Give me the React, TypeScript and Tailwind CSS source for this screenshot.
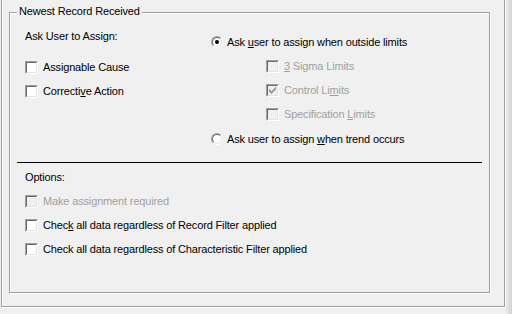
import React from 'react';

const font = "font-['Liberation_Sans',Arial,sans-serif]";

function CheckMark() {
  // classic 7x7 pixel tick
  const px: [number, number][] = [
    [6, 0], [5, 1], [6, 1], [0, 2], [4, 2], [5, 2], [6, 2],
    [0, 3], [1, 3], [3, 3], [4, 3], [5, 3],
    [0, 4], [1, 4], [2, 4], [3, 4], [4, 4],
    [1, 5], [2, 5], [3, 5], [2, 6],
  ];
  return (
    <svg width="7" height="7" viewBox="0 0 7 7" shapeRendering="crispEdges">
      {px.map(([x, y]) => (
        <rect key={`${x}-${y}`} x={x} y={y} width="1" height="1" fill="#a0a0a0" />
      ))}
    </svg>
  );
}

function Box({ checked = false, disabled = false }: { checked?: boolean; disabled?: boolean }) {
  return (
    <div className="w-[13px] h-[13px] shrink-0 border-t border-l border-[#a0a0a0] border-b-white border-r-white border-b border-r">
      <div
        className={`w-[11px] h-[11px] border-t border-l border-[#696969] border-b border-r border-b-[#e3e3e3] border-r-[#e3e3e3] flex items-center justify-center ${
          disabled ? 'bg-[#f0f0f0]' : 'bg-white'
        }`}
      >
        {checked && <CheckMark />}
      </div>
    </div>
  );
}

function Radio({ checked = false }: { checked?: boolean }) {
  return (
    <div className="w-[12px] h-[12px] shrink-0 rounded-full border border-[#a0a0a0] border-b-white border-r-white">
      <div className="w-[10px] h-[10px] rounded-full border border-[#696969] border-b-[#e3e3e3] border-r-[#e3e3e3] bg-white flex items-center justify-center">
        {checked && <div className="w-[4px] h-[4px] rounded-full bg-black" />}
      </div>
    </div>
  );
}

function CheckRow({
  children,
  checked,
  disabled,
  className = '',
}: {
  children: React.ReactNode;
  checked?: boolean;
  disabled?: boolean;
  className?: string;
}) {
  return (
    <div className={`h-[24px] flex items-center gap-[5px] ${className}`}>
      <Box checked={checked} disabled={disabled} />
      <span className={disabled ? 'text-[#a0a0a0]' : 'text-black'}>{children}</span>
    </div>
  );
}

function RadioRow({ children, checked, className = '' }: { children: React.ReactNode; checked?: boolean; className?: string }) {
  return (
    <div className={`h-[24px] flex items-center gap-[4px] ${className}`}>
      <Radio checked={checked} />
      <span>{children}</span>
    </div>
  );
}

export default function App() {
  return (
    <div className={`w-[512px] h-[314px] bg-[#f0f0f0] flex overflow-hidden text-[11px] leading-[13px] tracking-[-0.15px] text-black ${font}`}>
      {/* etched outer frame */}
      <div className="ml-[1px] w-[504px] h-[307px] shrink-0 border-l border-r border-b border-[#a0a0a0] shadow-[inset_1px_0_0_#fff,1px_1px_0_#fff] pl-[7px] pt-[12px]">
        {/* group box */}
        <div className="relative w-[481px] h-[281px] border border-[#a0a0a0] shadow-[inset_1px_1px_0_#fff,1px_1px_0_#fff]">
          <span className="absolute -top-[8px] left-[7px] px-[2px] bg-[#f0f0f0]">Newest Record Received</span>

          <div className="h-[149px] flex">
            <div className="w-[201px] pl-[15px] pt-[11px]">
              <div className="h-[24px] flex items-center">Ask User to Assign:</div>
              <CheckRow className="mt-[7px]">Assignable Cause</CheckRow>
              <CheckRow>
                Correcti<u>v</u>e Action
              </CheckRow>
            </div>
            <div className="pt-[17px]">
              <RadioRow checked>
                Ask <u>u</u>ser to assign when outside limits
              </RadioRow>
              <div className="pl-[55px]">
                <CheckRow disabled>
                  <u>3</u> Sigma Limits
                </CheckRow>
                <CheckRow disabled checked>
                  Control Li<u>m</u>its
                </CheckRow>
                <CheckRow disabled>
                  Specification <u>L</u>imits
                </CheckRow>
              </div>
              <RadioRow className="mt-[1px]">
                Ask user to assign <u>w</u>hen trend occurs
              </RadioRow>
            </div>
          </div>

          <div className="ml-[7px] w-[465px] h-px bg-black" />

          <div className="pl-[15px] pt-[2px]">
            <div className="h-[24px] flex items-center">Options:</div>
            <CheckRow disabled>
              Make assi<u>g</u>nment required
            </CheckRow>
            <CheckRow>
              Chec<u>k</u> all data regardless of Record Filter applied
            </CheckRow>
            <CheckRow>Check all data regardless of Characteristic Filter applied</CheckRow>
          </div>
        </div>
      </div>
      <div className="flex-1 ml-[1px] bg-gradient-to-r from-[#ececec] to-[#d2d2d2]" />
    </div>
  );
}
